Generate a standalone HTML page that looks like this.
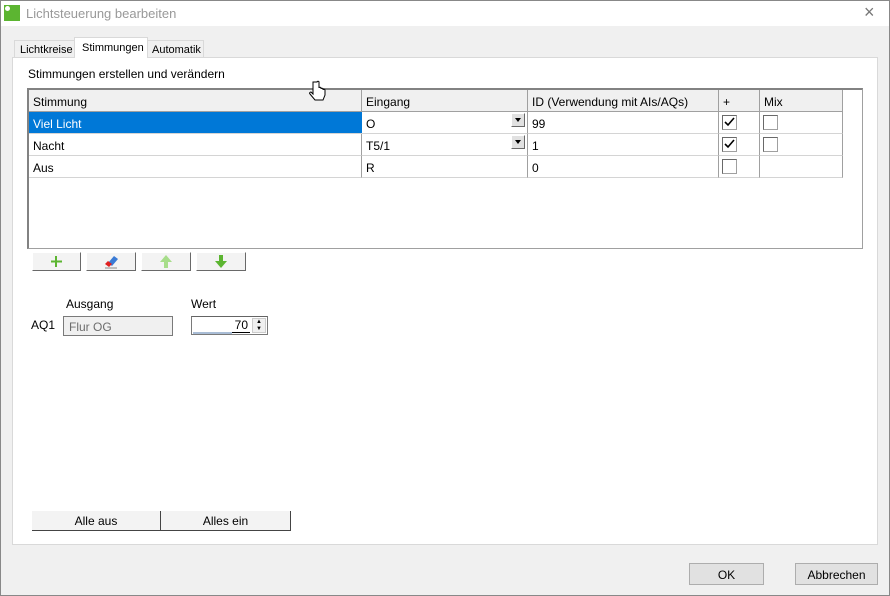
<!DOCTYPE html>
<html><head><meta charset="utf-8"><style>
*{box-sizing:border-box;margin:0;padding:0}
body{width:890px;height:596px;overflow:hidden;background:#f0f0f0;font-family:"Liberation Sans",sans-serif;font-size:12px;color:#000;position:relative}
.a{position:absolute}
.btn{position:absolute;background:#e1e1e1;border:1px solid #adadad;text-align:center;font-size:12px}
.cell{position:absolute;border-right:1px solid #a0a0a0;border-bottom:1px solid #d4d4d4;padding:5px 0 0 4px;height:22px}
.hd{position:absolute;background:#f0f0f0;border-right:1px solid #a0a0a0;border-bottom:1px solid #a0a0a0;padding:5px 0 0 4px;height:22px}
.cb{position:absolute;width:15px;height:15px;border:1px solid #a0a0a0;border-top-color:#696969;border-left-color:#696969;background:#fff}
.dd{position:absolute;width:14px;height:14px;background:#e1e1e1;border:1px solid #fff;border-right-color:#696969;border-bottom-color:#696969}
.dd:after{content:"";position:absolute;left:3px;top:4px;border-left:3px solid transparent;border-right:3px solid transparent;border-top:4px solid #000}
.tb{position:absolute;top:252px;height:19px;background:#f3f3f3;border-right:1px solid #696969;border-bottom:1px solid #696969;border-left:1px solid #fff;border-top:1px solid #fff}
</style></head><body>
<div class="a" style="left:0;top:0;width:890px;height:596px;border:1px solid #888"></div>
<div class="a" style="left:1px;top:1px;width:888px;height:25px;background:#fff"></div>
<div class="a" style="left:4px;top:5px;width:16px;height:16px;background:#5cb531"></div>
<div class="a" style="left:5px;top:6px;width:5px;height:5px;background:#fff;border-radius:50%"></div>
<div class="a" style="left:26px;top:6px;font-size:13px;color:#999">Lichtsteuerung bearbeiten</div>
<div class="a" style="left:864px;top:2px;font-size:18px;color:#777">×</div>
<div class="a" style="left:14px;top:40px;width:61px;height:18px;background:#f0f0f0;border:1px solid #d9d9d9;padding:3px 0 0 5px;font-size:11px">Lichtkreise</div>
<div class="a" style="left:74px;top:37px;width:74px;height:21px;background:#fff;border:1px solid #d9d9d9;border-bottom:none;padding:4px 0 0 7px;font-size:11px;z-index:2">Stimmungen</div>
<div class="a" style="left:147px;top:40px;width:57px;height:18px;background:#f0f0f0;border:1px solid #d9d9d9;padding:3px 0 0 4px;font-size:11px">Automatik</div>
<div class="a" style="left:12px;top:57px;width:866px;height:488px;background:#fff;border:1px solid #d9d9d9"></div>
<div class="a" style="left:28px;top:67px">Stimmungen erstellen und verändern</div>
<div class="a" style="left:27px;top:88px;width:836px;height:161px;border:1px solid #a0a0a0;border-top:2px solid #828282;border-left:2px solid #828282;background:#fff"></div>
<div class="hd" style="left:29px;top:90px;width:333px">Stimmung</div>
<div class="hd" style="left:362px;top:90px;width:166px">Eingang</div>
<div class="hd" style="left:528px;top:90px;width:191px">ID (Verwendung mit AIs/AQs)</div>
<div class="hd" style="left:719px;top:90px;width:41px">+</div>
<div class="hd" style="left:760px;top:90px;width:83px">Mix</div>
<div class="cell" style="left:29px;top:112px;width:333px;background:#0078d7;color:#fff;border-right:none">Viel Licht</div>
<div class="cell" style="left:362px;top:112px;width:166px">O</div>
<div class="cell" style="left:528px;top:112px;width:191px">99</div>
<div class="cell" style="left:719px;top:112px;width:41px"></div>
<div class="cell" style="left:760px;top:112px;width:83px"></div>
<div class="cell" style="left:29px;top:134px;width:333px">Nacht</div>
<div class="cell" style="left:362px;top:134px;width:166px">T5/1</div>
<div class="cell" style="left:528px;top:134px;width:191px">1</div>
<div class="cell" style="left:719px;top:134px;width:41px"></div>
<div class="cell" style="left:760px;top:134px;width:83px"></div>
<div class="cell" style="left:29px;top:156px;width:333px">Aus</div>
<div class="cell" style="left:362px;top:156px;width:166px">R</div>
<div class="cell" style="left:528px;top:156px;width:191px">0</div>
<div class="cell" style="left:719px;top:156px;width:41px"></div>
<div class="cell" style="left:760px;top:156px;width:83px"></div>
<div class="dd" style="left:511px;top:113px"></div>
<div class="dd" style="left:511px;top:135px"></div>
<div class="cb" style="left:722px;top:115px"><svg width="13" height="13"><path d="M2 6l3 3 6-7" stroke="#000" stroke-width="1.6" fill="none"/></svg></div>
<div class="cb" style="left:763px;top:115px"></div>
<div class="cb" style="left:722px;top:137px"><svg width="13" height="13"><path d="M2 6l3 3 6-7" stroke="#000" stroke-width="1.6" fill="none"/></svg></div>
<div class="cb" style="left:763px;top:137px"></div>
<div class="cb" style="left:722px;top:159px"></div>
<div class="tb" style="left:32px;width:49px"><svg width="47" height="17"><path d="M23 3v11M18 8.5h11" stroke="#5cb531" stroke-width="2"/></svg></div>
<div class="tb" style="left:86px;width:50px"><svg width="48" height="17"><path d="M21 10l6-7 4 3-6 7z" fill="#3a7bd5"/><path d="M18 11l3-3 4 3-3 3z" fill="#e02020"/><path d="M18 15h12" stroke="#888"/></svg></div>
<div class="tb" style="left:141px;width:50px"><svg width="48" height="17"><path d="M24 2l6 7h-4v6h-4v-6h-4z" fill="#a7dd8a"/></svg></div>
<div class="tb" style="left:196px;width:50px"><svg width="48" height="17"><path d="M24 15l6-7h-4v-6h-4v6h-4z" fill="#5cb531"/></svg></div>
<div class="a" style="left:66px;top:297px">Ausgang</div>
<div class="a" style="left:191px;top:297px">Wert</div>
<div class="a" style="left:31px;top:318px">AQ1</div>
<div class="a" style="left:63px;top:316px;width:110px;height:20px;background:#f0f0f0;border:1px solid #7a7a7a;padding:3px 0 0 5px;color:#6d6d6d">Flur OG</div>
<div class="a" style="left:191px;top:316px;width:77px;height:19px;border:1px solid #7a7a7a;border-top-color:#646464;background:#fff"></div>
<div class="a" style="left:193px;top:318px;width:57px;text-align:right;padding-right:2px;border-bottom:1px solid #000">70</div>
<div class="a" style="left:193px;top:332px;width:39px;height:2px;background:#a9bdd6"></div>
<div class="a" style="left:252px;top:318px;width:14px;height:15px;background:#f0f0f0;border:1px solid #ccc;font-size:6px;line-height:7px;text-align:center">▲<br>▼</div>
<div class="a" style="left:32px;top:511px;width:129px;height:20px;background:#f3f3f3;border-bottom:1px solid #444;border-right:1px solid #444;text-align:center;padding-top:3px">Alle aus</div>
<div class="a" style="left:161px;top:511px;width:130px;height:20px;background:#f3f3f3;border-bottom:1px solid #444;border-right:1px solid #444;text-align:center;padding-top:3px">Alles ein</div>
<div class="btn" style="left:689px;top:563px;width:75px;height:22px;padding-top:4px">OK</div>
<div class="btn" style="left:795px;top:563px;width:83px;height:22px;padding-top:4px">Abbrechen</div>
<svg class="a" style="left:308px;top:80px" width="20" height="24"><path d="M5 2v12l-2-2c-1 0-2 1-1 2l5 6h8l2-5v-5c0-1-2-1-2 0v-1c0-1-2-1-2 0v-1c0-1-2-1-2 0V2c0-1-2-1-2 0z" fill="#fff" stroke="#000"/></svg>
</body></html>
